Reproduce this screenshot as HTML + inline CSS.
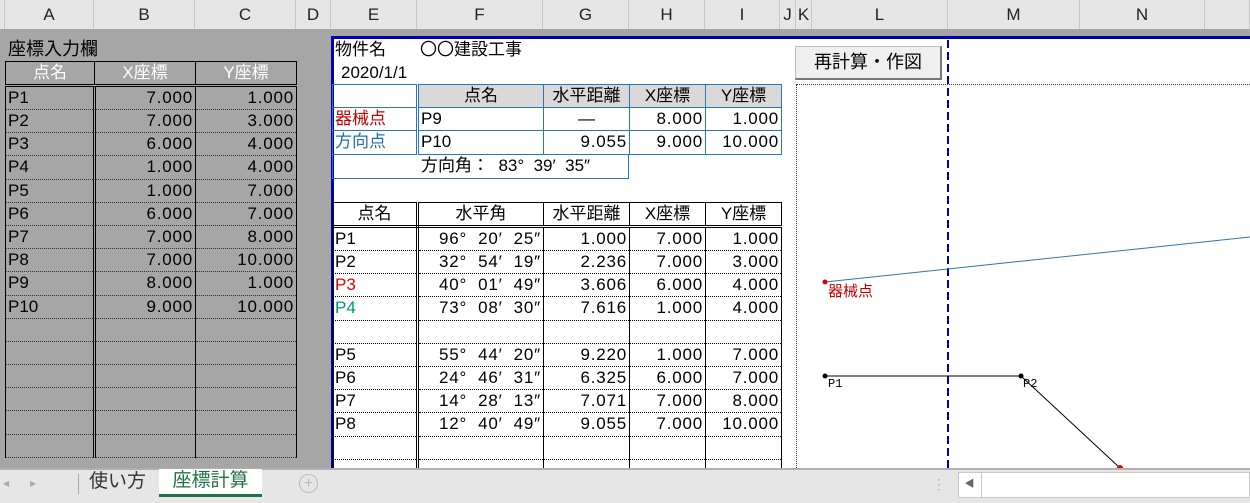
<!DOCTYPE html>
<html><head><meta charset="utf-8"><style>
*{box-sizing:border-box;margin:0;padding:0}
body{width:1250px;height:503px;overflow:hidden;background:#fff;font-family:"Liberation Sans","Noto Sans CJK JP",sans-serif;position:relative;font-size:16px;color:#000}
.a{position:absolute}
.ch{position:absolute;top:0;height:29px;background:#e6e6e6;border-right:1px solid #c8c8c8;text-align:center;line-height:29px;font-size:17px;color:#222}
table{border-collapse:collapse;table-layout:fixed;position:absolute}
td{height:23.2px;padding:0 2px;white-space:pre;overflow:hidden;font-size:17px;line-height:22px}
.r{text-align:right;letter-spacing:0.8px}.c{text-align:center}
#lt td{border:1px solid #000;border-top:1px dotted #333;border-bottom:1px dotted #333}
#lt td.d{border-right:3px double #000}
#lt td.dt{border-right:1px dotted #333}
#lt tr.h td{border:1px solid #000;color:#fff;border-bottom:3px double #000}
#tt td{border:1px solid #2e75b6}
#tt td.dt{border-right:1px dotted #2e75b6}
#tt td.db{border-right:3px double #2e75b6}
#bt td{border:1px solid #000;border-top:1px dotted #000;border-bottom:1px dotted #000}
#bt td.db{border-right:3px double #000}
#bt td.dt{border-right:1px dotted #000}
#bt tr.h td{border-top:1px solid #000;border-bottom:3px double #000}
</style></head><body>
<div class="a" style="left:0;top:0;width:1250px;height:29px;background:#e6e6e6"></div>
<div class="ch" style="left:0;width:5px"></div>
<div class="ch" style="left:5px;width:89px">A</div>
<div class="ch" style="left:94px;width:101px">B</div>
<div class="ch" style="left:195px;width:101px">C</div>
<div class="ch" style="left:296px;width:35px">D</div>
<div class="ch" style="left:331px;width:86px">E</div>
<div class="ch" style="left:417px;width:126px">F</div>
<div class="ch" style="left:543px;width:86px">G</div>
<div class="ch" style="left:629px;width:76px">H</div>
<div class="ch" style="left:705px;width:75px">I</div>
<div class="ch" style="left:780px;width:16px">J</div>
<div class="ch" style="left:796px;width:16px">K</div>
<div class="ch" style="left:812px;width:136px">L</div>
<div class="ch" style="left:948px;width:132px">M</div>
<div class="ch" style="left:1080px;width:125px">N</div>
<div class="ch" style="left:1205px;width:45px"></div>
<div class="a" style="left:0;top:29px;width:1250px;height:439px;background:#a6a6a6"></div>
<div class="a" style="left:331px;top:36px;width:919px;height:432px;background:#fff;border-top:3px solid #0000b4;border-left:3px solid #0000b4"></div>
<div class="a" style="left:8px;top:38px;font-size:18px;line-height:23px">座標入力欄</div>
<table id="lt" style="left:5px;top:61px;width:291px">
<col style="width:89px"><col style="width:101px"><col style="width:101px">
<tr class="h"><td class="c d">点名</td><td class="c dt">X座標</td><td class="c">Y座標</td></tr>
<tr><td class="d">P1</td><td class="r dt">7.000</td><td class="r">1.000</td></tr>
<tr><td class="d">P2</td><td class="r dt">7.000</td><td class="r">3.000</td></tr>
<tr><td class="d">P3</td><td class="r dt">6.000</td><td class="r">4.000</td></tr>
<tr><td class="d">P4</td><td class="r dt">1.000</td><td class="r">4.000</td></tr>
<tr><td class="d">P5</td><td class="r dt">1.000</td><td class="r">7.000</td></tr>
<tr><td class="d">P6</td><td class="r dt">6.000</td><td class="r">7.000</td></tr>
<tr><td class="d">P7</td><td class="r dt">7.000</td><td class="r">8.000</td></tr>
<tr><td class="d">P8</td><td class="r dt">7.000</td><td class="r">10.000</td></tr>
<tr><td class="d">P9</td><td class="r dt">8.000</td><td class="r">1.000</td></tr>
<tr><td class="d">P10</td><td class="r dt">9.000</td><td class="r">10.000</td></tr>
<tr><td class="d"></td><td class="dt"></td><td></td></tr>
<tr><td class="d"></td><td class="dt"></td><td></td></tr>
<tr><td class="d"></td><td class="dt"></td><td></td></tr>
<tr><td class="d"></td><td class="dt"></td><td></td></tr>
<tr><td class="d"></td><td class="dt"></td><td></td></tr>
<tr><td class="d"></td><td class="dt"></td><td></td></tr>
</table>
<div class="a" style="left:335px;top:39px;font-size:17px;line-height:22px;white-space:pre">物件名　　〇〇建設工事</div>
<div class="a" style="left:341px;top:62px;font-size:17px;line-height:22px">2020/1/1</div>
<table id="tt" style="left:332px;top:84px;width:449px">
<col style="width:85px"><col style="width:126px"><col style="width:86px"><col style="width:76px"><col style="width:76px">
<tr><td class="db"></td><td class="c dt" style="background:#d9d9d9">点名</td><td class="c dt" style="background:#d9d9d9">水平距離</td><td class="c dt" style="background:#d9d9d9">X座標</td><td class="c" style="background:#d9d9d9">Y座標</td></tr>
<tr><td class="db" style="color:#c00000;border-bottom:1px dotted #2e75b6">器械点</td><td class="dt" style="border-bottom:1px dotted #2e75b6">P9</td><td class="c dt" style="border-bottom:1px dotted #2e75b6">—</td><td class="r dt" style="border-bottom:1px dotted #2e75b6">8.000</td><td class="r" style="border-bottom:1px dotted #2e75b6">1.000</td></tr>
<tr><td class="db" style="color:#1f6fa8">方向点</td><td class="dt">P10</td><td class="r dt">9.055</td><td class="r dt">9.000</td><td class="r">10.000</td></tr>
</table>
<div class="a" style="left:332px;top:154px;width:297px;height:25px;border:1px solid #2e75b6;border-top:none;padding-left:88px;font-size:17px;line-height:23px;white-space:pre">方向角：  83°  39′  35″</div>
<table id="bt" style="left:332px;top:202px;width:449px">
<col style="width:85px"><col style="width:126px"><col style="width:86px"><col style="width:76px"><col style="width:76px">
<tr class="h"><td class="c db">点名</td><td class="c dt">水平角</td><td class="c">水平距離</td><td class="c dt">X座標</td><td class="c">Y座標</td></tr>
<tr><td class="db">P1</td><td class="r dt">96°  20′  25″</td><td class="r">1.000</td><td class="r dt">7.000</td><td class="r">1.000</td></tr>
<tr><td class="db">P2</td><td class="r dt">32°  54′  19″</td><td class="r">2.236</td><td class="r dt">7.000</td><td class="r">3.000</td></tr>
<tr><td class="db" style="color:#e00000">P3</td><td class="r dt">40°  01′  49″</td><td class="r">3.606</td><td class="r dt">6.000</td><td class="r">4.000</td></tr>
<tr><td class="db" style="color:#00966e">P4</td><td class="r dt">73°  08′  30″</td><td class="r">7.616</td><td class="r dt">1.000</td><td class="r">4.000</td></tr>
<tr><td class="db"></td><td class="dt"></td><td></td><td class="dt"></td><td></td></tr>
<tr><td class="db">P5</td><td class="r dt">55°  44′  20″</td><td class="r">9.220</td><td class="r dt">1.000</td><td class="r">7.000</td></tr>
<tr><td class="db">P6</td><td class="r dt">24°  46′  31″</td><td class="r">6.325</td><td class="r dt">6.000</td><td class="r">7.000</td></tr>
<tr><td class="db">P7</td><td class="r dt">14°  28′  13″</td><td class="r">7.071</td><td class="r dt">7.000</td><td class="r">8.000</td></tr>
<tr><td class="db">P8</td><td class="r dt">12°  40′  49″</td><td class="r">9.055</td><td class="r dt">7.000</td><td class="r">10.000</td></tr>
<tr><td class="db"></td><td class="dt"></td><td></td><td class="dt"></td><td></td></tr>
<tr><td class="db"></td><td class="dt"></td><td></td><td class="dt"></td><td></td></tr>
</table>
<div class="a" style="left:795px;top:46px;width:147px;height:34px;background:#efefef;border:1px solid #bbb;border-right:2px solid #777;border-bottom:2px solid #777;text-align:center;font-size:18px;line-height:30px">再計算・作図</div>
<div class="a" style="left:796px;top:84px;width:460px;height:390px;border-left:1px dotted #333;border-top:1px dotted #333"></div>
<svg class="a" style="left:0;top:0" width="1250" height="468">
<line x1="948" y1="40" x2="948" y2="468" stroke="#0000b4" stroke-width="2" stroke-dasharray="8,4"/>
<line x1="825" y1="282" x2="1250" y2="237" stroke="#2e75b6" stroke-width="1"/>
<line x1="825" y1="376" x2="1021" y2="376" stroke="#000" stroke-width="1"/>
<line x1="1021" y1="376" x2="1120" y2="468" stroke="#000" stroke-width="1"/>
<circle cx="825" cy="282" r="2.5" fill="#e00000"/>
<circle cx="825" cy="376" r="2.5" fill="#000"/>
<circle cx="1021" cy="376" r="2.5" fill="#000"/>
<circle cx="1120" cy="468" r="3" fill="#e00000"/>
<text x="828" y="296" font-size="15" fill="#c00000" font-family="Liberation Sans,Noto Sans CJK JP,sans-serif">器械点</text>
<text x="828" y="387" font-size="12" fill="#000" font-family="Liberation Mono,monospace">P1</text>
<text x="1023" y="387" font-size="12" fill="#000" font-family="Liberation Mono,monospace">P2</text>
</svg>
<div class="a" style="left:0;top:468px;width:1250px;height:35px;background:#e6e6e6;border-top:2px solid #b0b0b0"></div>
<div class="a" style="left:3px;top:476px;color:#aaa;font-size:12px">◂</div>
<div class="a" style="left:30px;top:476px;color:#aaa;font-size:12px">▸</div>
<div class="a" style="left:78px;top:474px;width:1px;height:20px;background:#aaa"></div>
<div class="a" style="left:89px;top:470px;font-size:19px;line-height:24px;color:#333">使い方</div>
<div class="a" style="left:159px;top:469px;width:103px;height:28px;background:#fff;border-bottom:3px solid #217346;text-align:center;color:#217346;font-size:19px;line-height:24px">座標計算</div>
<div class="a" style="left:299px;top:474px;width:19px;height:19px;border:1px solid #bbb;border-radius:50%;color:#bbb;text-align:center;line-height:17px;font-size:16px">+</div>
<div class="a" style="left:937px;top:477px;color:#999;font-size:12px;line-height:5px">·<br>·<br>·</div>
<div class="a" style="left:958px;top:472px;width:292px;height:26px;background:#fff;border:1px solid #c8c8c8"></div>
<div class="a" style="left:958px;top:472px;width:24px;height:26px;border-right:1px solid #c8c8c8;color:#666;text-align:center;font-size:10px;line-height:26px">◀</div>
</body></html>
